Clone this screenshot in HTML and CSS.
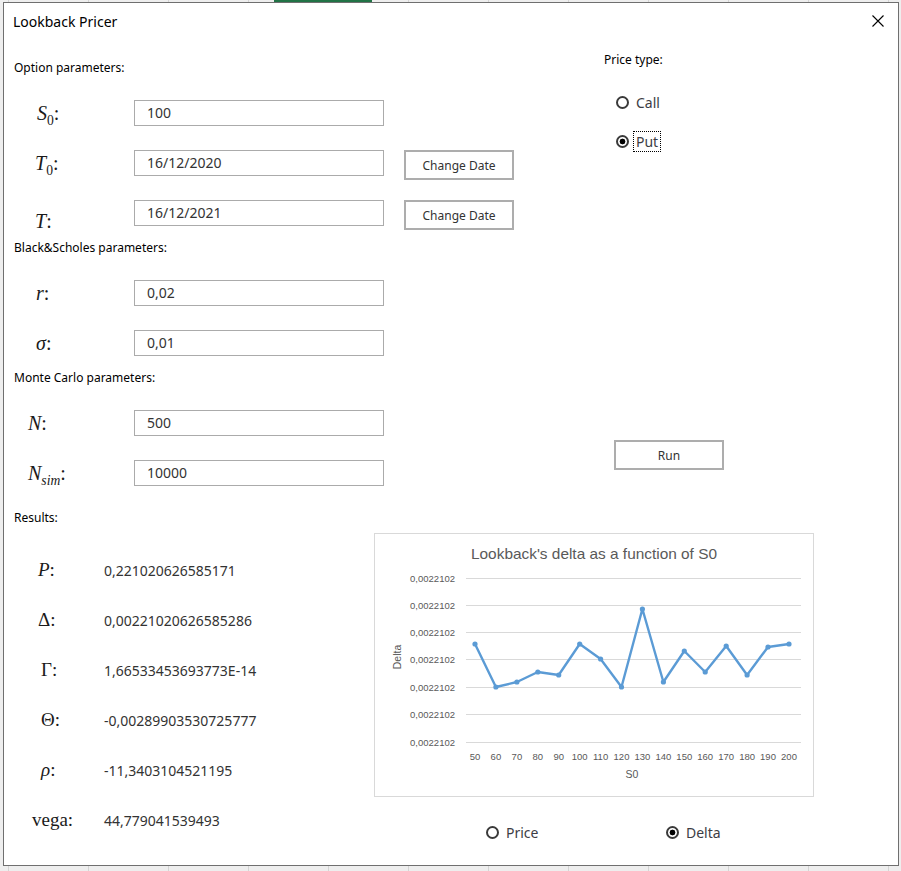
FILE: index.html
```html
<!DOCTYPE html>
<html lang="en">
<head>
<meta charset="utf-8">
<title>Lookback Pricer</title>
<link rel="stylesheet" href="styles.css">
</head>
<body>
<div class="dialog">
  <div class="titlebar">
    <span class="title">Lookback Pricer</span>
    <svg class="close" width="12" height="12" viewBox="0 0 12 12"><path d="M0.5 0.5 L11.5 11.5 M11.5 0.5 L0.5 11.5" stroke="#000" stroke-width="1.1" fill="none"/></svg>
  </div>

  <div class="top">
    <div class="form">
      <div class="section-title">Option parameters:</div>
      <div class="rows">
        <div class="row">
          <div class="label math lbl-s"><i>S</i><sub>0</sub>:</div>
          <div class="input">100</div>
        </div>
        <div class="row">
          <div class="label math lbl-t0"><i>T</i><sub>0</sub>:</div>
          <div class="input">16/12/2020</div>
          <div class="btn btn-date">Change Date</div>
        </div>
        <div class="row">
          <div class="label math lbl-t"><i>T</i>:</div>
          <div class="input">16/12/2021</div>
          <div class="btn btn-date">Change Date</div>
        </div>
      </div>

      <div class="section-title">Black&amp;Scholes parameters:</div>
      <div class="rows">
        <div class="row">
          <div class="label math lbl-r"><i>r</i>:</div>
          <div class="input">0,02</div>
        </div>
        <div class="row">
          <div class="label math lbl-r"><i>σ</i>:</div>
          <div class="input">0,01</div>
        </div>
      </div>

      <div class="section-title">Monte Carlo parameters:</div>
      <div class="rows">
        <div class="row">
          <div class="label math lbl-n"><i>N</i>:</div>
          <div class="input">500</div>
        </div>
        <div class="row">
          <div class="label math lbl-n"><i>N</i><sub class="it">sim</sub>:</div>
          <div class="input">10000</div>
        </div>
      </div>
    </div>

    <div class="side">
      <div class="section-title">Price type:</div>
      <div class="radio-group">
        <div class="radio"><span class="dot"></span><span class="rtext">Call</span></div>
        <div class="radio"><span class="dot on"></span><span class="rtext focus">Put</span></div>
      </div>
      <div class="btn btn-run">Run</div>
    </div>
  </div>

  <div class="bottom">
    <div class="results">
      <div class="section-title">Results:</div>
      <div class="result-list">
        <div class="result"><div class="rlabel math rl-p"><i>P</i>:</div><div class="rvalue">0,221020626585171</div></div>
        <div class="result"><div class="rlabel math rl-p">Δ:</div><div class="rvalue">0,00221020626585286</div></div>
        <div class="result"><div class="rlabel math rl-g">Γ:</div><div class="rvalue">1,66533453693773E-14</div></div>
        <div class="result"><div class="rlabel math rl-g">Θ:</div><div class="rvalue">-0,00289903530725777</div></div>
        <div class="result"><div class="rlabel math rl-g"><i>ρ</i>:</div><div class="rvalue">-11,3403104521195</div></div>
        <div class="result"><div class="rlabel math rl-v">vega:</div><div class="rvalue">44,779041539493</div></div>
      </div>
    </div>

    <div class="chart-col">
      <div class="chart">
        <svg width="438" height="262" viewBox="0 0 438 262">
          <text x="219" y="25" text-anchor="middle" class="c-title" textLength="246" lengthAdjust="spacingAndGlyphs">Lookback's delta as a function of S0</text>
          <g stroke="#d9d9d9" stroke-width="1">
            <line x1="91" x2="426" y1="44.5" y2="44.5"/>
            <line x1="91" x2="426" y1="71.5" y2="71.5"/>
            <line x1="91" x2="426" y1="98.5" y2="98.5"/>
            <line x1="91" x2="426" y1="125.5" y2="125.5"/>
            <line x1="91" x2="426" y1="153.5" y2="153.5"/>
            <line x1="91" x2="426" y1="180.5" y2="180.5"/>
            <line x1="91" x2="426" y1="208.5" y2="208.5"/>
          </g>
          <g class="c-axis" text-anchor="end">
            <text x="80" y="48">0,0022102</text>
            <text x="80" y="75">0,0022102</text>
            <text x="80" y="102">0,0022102</text>
            <text x="80" y="129">0,0022102</text>
            <text x="80" y="157">0,0022102</text>
            <text x="80" y="184">0,0022102</text>
            <text x="80" y="212">0,0022102</text>
          </g>
          <g class="c-axis" text-anchor="middle">
            <text x="100" y="226">50</text>
            <text x="120.9" y="226">60</text>
            <text x="141.9" y="226">70</text>
            <text x="162.8" y="226">80</text>
            <text x="183.7" y="226">90</text>
            <text x="204.7" y="226">100</text>
            <text x="225.6" y="226">110</text>
            <text x="246.5" y="226">120</text>
            <text x="267.4" y="226">130</text>
            <text x="288.4" y="226">140</text>
            <text x="309.3" y="226">150</text>
            <text x="330.2" y="226">160</text>
            <text x="351.2" y="226">170</text>
            <text x="372.1" y="226">180</text>
            <text x="393" y="226">190</text>
            <text x="414" y="226">200</text>
          </g>
          <text x="257" y="244" text-anchor="middle" class="c-label">S0</text>
          <text transform="translate(26 123) rotate(-90)" text-anchor="middle" class="c-label">Delta</text>
          <polyline fill="none" stroke="#5b9bd5" stroke-width="2.4" stroke-linejoin="round" stroke-linecap="round"
            points="100,110 120.9,153 141.9,148 162.8,138 183.7,141 204.7,110 225.6,125 246.5,153 267.4,75 288.4,148 309.3,117 330.2,138 351.2,112 372.1,141 393,113 414,110"/>
          <g fill="#5b9bd5">
            <circle cx="100" cy="110" r="2.6"/>
            <circle cx="120.9" cy="153" r="2.6"/>
            <circle cx="141.9" cy="148" r="2.6"/>
            <circle cx="162.8" cy="138" r="2.6"/>
            <circle cx="183.7" cy="141" r="2.6"/>
            <circle cx="204.7" cy="110" r="2.6"/>
            <circle cx="225.6" cy="125" r="2.6"/>
            <circle cx="246.5" cy="153" r="2.6"/>
            <circle cx="267.4" cy="75" r="2.6"/>
            <circle cx="288.4" cy="148" r="2.6"/>
            <circle cx="309.3" cy="117" r="2.6"/>
            <circle cx="330.2" cy="138" r="2.6"/>
            <circle cx="351.2" cy="112" r="2.6"/>
            <circle cx="372.1" cy="141" r="2.6"/>
            <circle cx="393" cy="113" r="2.6"/>
            <circle cx="414" cy="110" r="2.6"/>
          </g>
        </svg>
      </div>
      <div class="chart-radios">
        <div class="radio"><span class="dot"></span><span class="rtext">Price</span></div>
        <div class="radio"><span class="dot on"></span><span class="rtext">Delta</span></div>
      </div>
    </div>
  </div>
</div>
</body>
</html>
```

FILE: styles.css
```css
* {
  box-sizing: border-box;
  margin: 0;
  padding: 0;
}

html, body {
  width: 901px;
  height: 871px;
  overflow: hidden;
}

body {
  font-family: "Noto Sans", "Open Sans", sans-serif;
  color: #000;
  background:
    linear-gradient(#217346, #217346) 274px 0 / 98px 2px no-repeat,
    repeating-linear-gradient(to right, transparent 0 8px, #d4d4d4 8px 9px, transparent 9px 80px),
    #eeeeee;
}

.dialog {
  margin: 2px 0 0 3px;
  width: 896px;
  height: 864px;
  border: 1px solid #6f6f6f;
  background: #fff;
  display: flex;
  flex-direction: column;
}

.titlebar {
  height: 36px;
  flex: none;
  display: flex;
  align-items: center;
  justify-content: space-between;
  padding: 0 14px 0 9px;
}

.title {
  font-size: 14px;
  color: #000;
}

.close {
  display: block;
}

.top {
  display: flex;
}

.form {
  width: 596px;
  padding: 21px 0 0 10px;
}

.section-title {
  font-size: 12px;
  line-height: 16px;
  height: 16px;
  color: #000;
  white-space: nowrap;
}

.rows {
  display: flex;
  flex-direction: column;
  gap: 24px;
  margin: 24px 0 14px;
}

.rows:last-child {
  margin-bottom: 0;
}

.row {
  display: flex;
  align-items: flex-start;
  height: 26px;
}

.math {
  font-family: "Liberation Serif", "DejaVu Serif", serif;
  font-size: 20px;
  color: #1a1a1a;
}

.math sub {
  font-size: 0.68em;
  vertical-align: -0.35em;
  line-height: 0;
}

.math sub.it {
  font-style: italic;
}

.label {
  width: 120px;
  flex: none;
  line-height: 26px;
  padding-left: 23px;
  white-space: nowrap;
}

.lbl-t0 {
  padding-left: 21px;
}

.lbl-t {
  padding-left: 21px;
  padding-top: 8px;
}

.lbl-r {
  padding-left: 22px;
}

.lbl-n {
  padding-left: 14px;
}

.input {
  width: 250px;
  height: 26px;
  flex: none;
  border: 1px solid #ababab;
  padding-left: 12px;
  font-size: 14px;
  line-height: 24px;
  color: #333;
}

.btn {
  width: 110px;
  height: 30px;
  flex: none;
  border: 2px solid #adadad;
  background: #fff;
  display: flex;
  align-items: center;
  justify-content: center;
  font-size: 12px;
  color: #333;
}

.btn-date {
  margin-left: 20px;
}

.side {
  flex: 1;
  padding: 13px 0 0 4px;
}

.radio-group {
  margin-top: 24px;
  padding-left: 12px;
  display: flex;
  flex-direction: column;
  gap: 19px;
}

.radio {
  display: flex;
  align-items: center;
  height: 20px;
  font-size: 14px;
  color: #3d3d45;
}

.dot {
  width: 13px;
  height: 13px;
  flex: none;
  border: 2px solid #3a3a3a;
  border-radius: 50%;
  background: #fff;
}

.dot.on {
  background: radial-gradient(circle, #000 0 2.6px, #fff 3.2px);
}

.rtext {
  margin-left: 4px;
  padding: 0 2px;
  border: 1px dotted transparent;
  line-height: 19px;
}

.rtext.focus {
  border-color: #000;
}

.btn-run {
  margin: 289px 0 0 10px;
}

.bottom {
  display: grid;
  grid-template-columns: 370px 440px;
  margin-top: 24px;
}

.results {
  padding-left: 10px;
}

.result-list {
  margin-top: 19px;
  display: flex;
  flex-direction: column;
}

.result {
  height: 50px;
  display: flex;
  align-items: center;
}

.rlabel {
  width: 90px;
  flex: none;
  padding-left: 24px;
  font-size: 19px;
}

.rl-g {
  padding-left: 27px;
}

.rl-v {
  padding-left: 18px;
}

.rvalue {
  font-size: 14px;
  color: #333;
}

.chart {
  margin-top: 23px;
  width: 440px;
  height: 264px;
  border: 1px solid #d9d9d9;
}

.chart svg {
  display: block;
}

.c-title {
  font-family: "Liberation Sans", "Open Sans", sans-serif;
  font-size: 15px;
  fill: #595959;
}

.c-axis {
  font-family: "Liberation Sans", sans-serif;
  font-size: 9.5px;
  fill: #595959;
}

.c-label {
  font-family: "Liberation Sans", sans-serif;
  font-size: 10.5px;
  fill: #595959;
}

.chart-radios {
  margin-top: 25px;
  padding-left: 112px;
  display: grid;
  grid-template-columns: 180px auto;
}
```
